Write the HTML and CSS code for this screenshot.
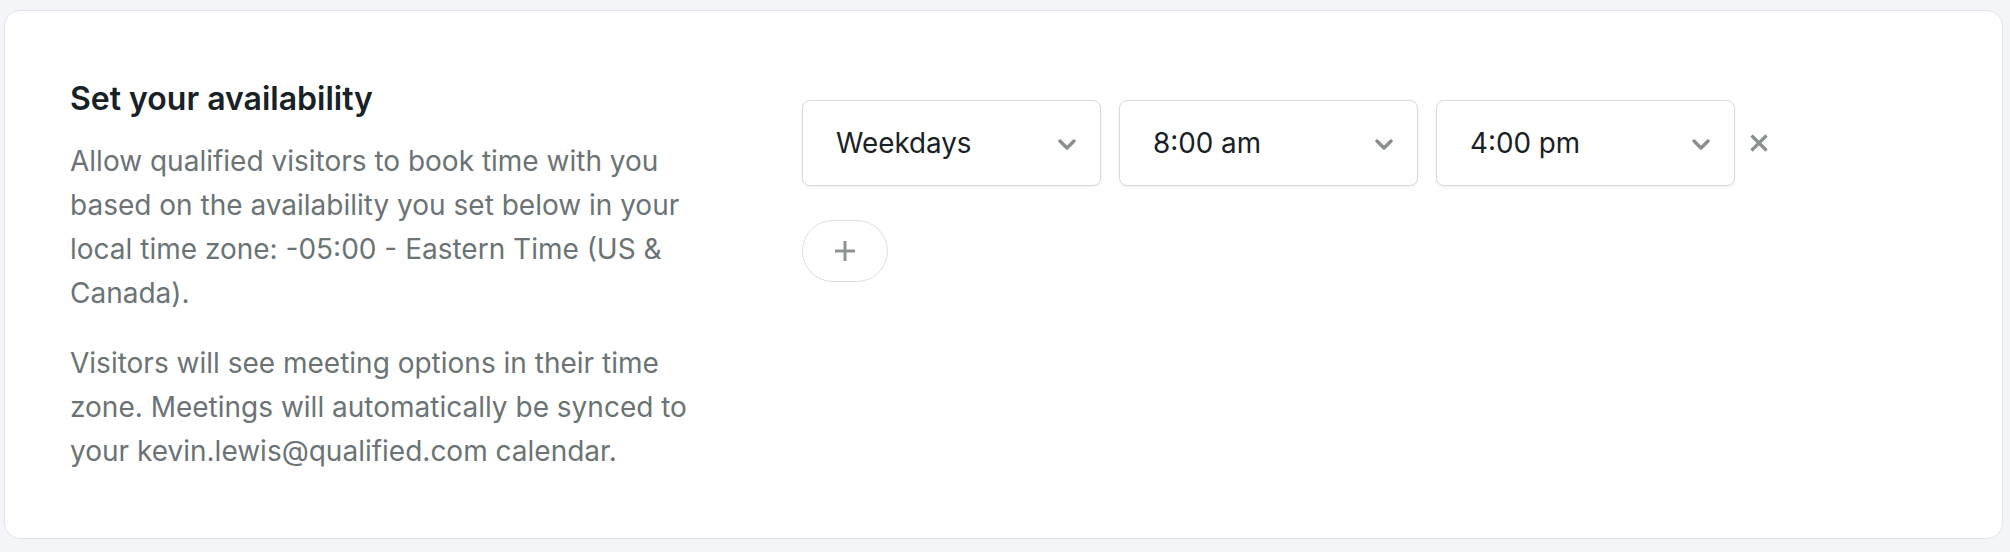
FILE: index.html
```html
<!DOCTYPE html>
<html lang="en">
<head>
<meta charset="utf-8">
<title>Set your availability</title>
<link rel="stylesheet" href="styles.css">
</head>
<body>
<div class="page">
  <section class="card">
    <div class="intro">
      <h2 class="title">Set your availability</h2>
      <p class="desc">Allow qualified visitors to book time with you based on the availability you set below in your local time zone: -05:00 - Eastern Time (US &amp; Canada).</p>
      <p class="desc">Visitors will see meeting options in their time zone. Meetings will automatically be synced to your kevin.lewis@qualified.com calendar.</p>
    </div>
    <div class="schedule">
      <div class="row">
        <div class="select">
          <span class="value">Weekdays</span>
          <svg class="chev" viewBox="0 0 18 11" width="18" height="11"><path d="M2 2 L9 9 L16 2" fill="none" stroke="#8a8e8e" stroke-width="3.4" stroke-linecap="round" stroke-linejoin="round"/></svg>
        </div>
        <div class="select">
          <span class="value">8:00 am</span>
          <svg class="chev" viewBox="0 0 18 11" width="18" height="11"><path d="M2 2 L9 9 L16 2" fill="none" stroke="#8a8e8e" stroke-width="3.4" stroke-linecap="round" stroke-linejoin="round"/></svg>
        </div>
        <div class="select">
          <span class="value">4:00 pm</span>
          <svg class="chev" viewBox="0 0 18 11" width="18" height="11"><path d="M2 2 L9 9 L16 2" fill="none" stroke="#8a8e8e" stroke-width="3.4" stroke-linecap="round" stroke-linejoin="round"/></svg>
        </div>
        <button class="remove" type="button" aria-label="Remove">
          <svg viewBox="0 0 20 20" width="20" height="20"><path d="M2.5 2.5 L17.5 17.5 M17.5 2.5 L2.5 17.5" fill="none" stroke="#8a8f8f" stroke-width="3.2"/></svg>
        </button>
      </div>
      <button class="add" type="button" aria-label="Add">
        <svg viewBox="0 0 22 22" width="22" height="22"><path d="M11 1 V21 M1 11 H21" fill="none" stroke="#8c9393" stroke-width="3"/></svg>
      </button>
    </div>
  </section>
</div>
</body>
</html>
```
FILE: styles.css
```css
html, body {
  margin: 0;
  padding: 0;
}
body {
  background: #f4f5f9;
  font-family: Inter, "Noto Sans", "Liberation Sans", sans-serif;
}
.page {
  padding: 10px 7px 16px 4px;
}
.card {
  background: #ffffff;
  border: 1px solid #e2e4ea;
  border-radius: 16px;
  padding: 69px 65px 65px 65px;
  display: grid;
  grid-template-columns: 645px auto;
  column-gap: 87px;
  align-items: start;
}
.title {
  margin: 0;
  font-size: 32px;
  line-height: 38px;
  font-weight: 600;
  color: #172126;
}
.desc {
  margin: 21px 0 0 0;
  font-size: 28px;
  line-height: 44px;
  color: #6b7375;
}
.desc + .desc {
  margin-top: 26px;
}
.schedule {
  padding-top: 20px;
  display: flex;
  flex-direction: column;
  align-items: flex-start;
}
.row {
  display: flex;
  align-items: center;
  gap: 18px;
}
.select {
  box-sizing: border-box;
  width: 299px;
  height: 86px;
  border: 1px solid #d6dadf;
  border-radius: 8px;
  box-shadow: 0 2px 3px rgba(20, 30, 40, 0.05);
  display: flex;
  align-items: center;
  justify-content: space-between;
  padding: 0 24px 0 33px;
  background: #fff;
}
.value {
  font-size: 27.8px;
  color: #1a2126;
}
.chev {
  display: block;
  margin-top: 2px;
}
.remove {
  border: 0;
  background: none;
  padding: 0;
  margin-left: -4px;
  display: flex;
  cursor: pointer;
}
.remove svg {
  display: block;
}
.add {
  margin-top: 34px;
  box-sizing: border-box;
  width: 86px;
  height: 62px;
  border: 1px solid #dcdfe2;
  border-radius: 31px;
  background: #fff;
  display: flex;
  align-items: center;
  justify-content: center;
  padding: 0;
  cursor: pointer;
}
.add svg {
  display: block;
}
```
